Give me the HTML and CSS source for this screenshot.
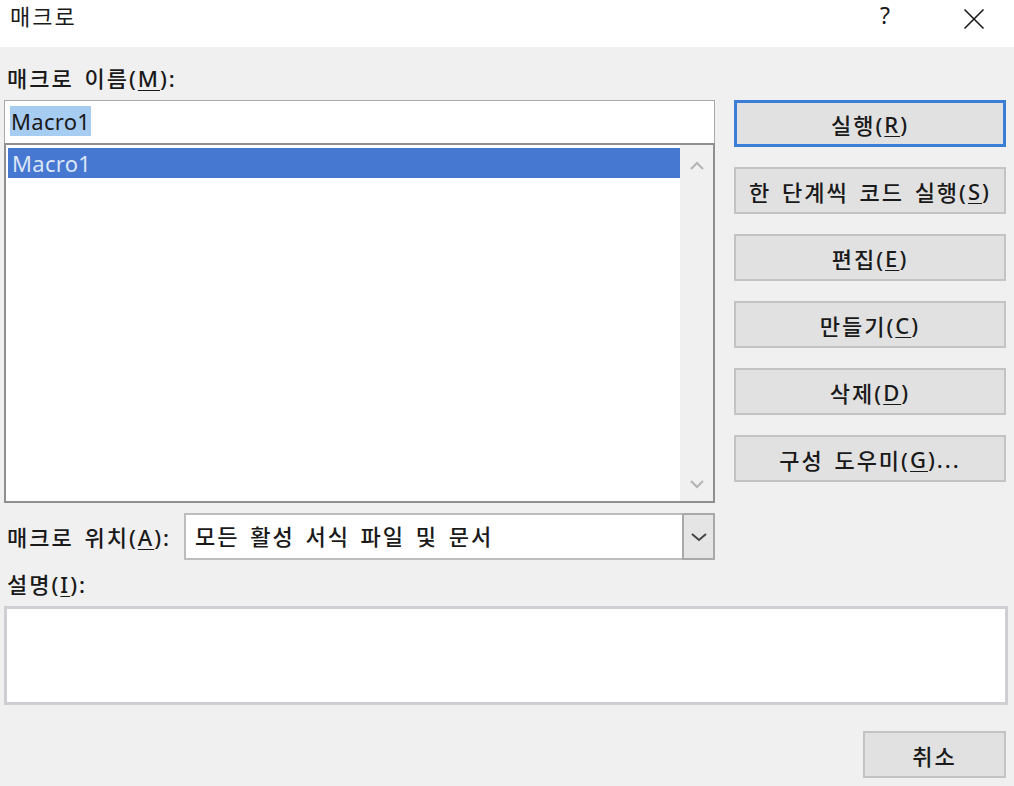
FILE: index.html
```html
<!DOCTYPE html>
<html lang="ko">
<head>
<meta charset="utf-8">
<title>매크로</title>
<link rel="stylesheet" href="styles.css">
</head>
<body>
<div class="dialog">
  <div class="titlebar">
    <div class="title">매크로</div>
    <div class="help">?</div>
    <div class="close">
      <svg width="22" height="22" viewBox="0 0 22 22"><path d="M1.5 1.5 L20.5 20.5 M20.5 1.5 L1.5 20.5" stroke="#1a1a1a" stroke-width="1.6" fill="none"/></svg>
    </div>
  </div>
  <div class="content">
    <div class="top">
      <div class="left">
        <div class="label">매크로 이름(<u>M</u>):</div>
        <div class="namebox"><span class="sel">Macro1</span></div>
        <div class="list">
          <div class="items">
            <div class="item selected">Macro1</div>
          </div>
          <div class="scroll">
            <svg width="16" height="10" viewBox="0 0 16 10"><path d="M2 8 L8 2 L14 8" stroke="#b4b4b4" stroke-width="2" fill="none"/></svg>
            <svg width="16" height="10" viewBox="0 0 16 10"><path d="M2 2 L8 8 L14 2" stroke="#b4b4b4" stroke-width="2" fill="none"/></svg>
          </div>
        </div>
      </div>
      <div class="buttons">
        <div class="btn default">실행(<u>R</u>)</div>
        <div class="btn">한 단계씩 코드 실행(<u>S</u>)</div>
        <div class="btn">편집(<u>E</u>)</div>
        <div class="btn">만들기(<u>C</u>)</div>
        <div class="btn">삭제(<u>D</u>)</div>
        <div class="btn">구성 도우미(<u>G</u>)...</div>
      </div>
    </div>
    <div class="location">
      <div class="label">매크로 위치(<u>A</u>):</div>
      <div class="combo">
        <div class="combo-text">모든 활성 서식 파일 및 문서</div>
        <div class="combo-btn">
          <svg width="18" height="10" viewBox="0 0 18 10"><path d="M2 2 L9 8 L16 2" stroke="#444" stroke-width="2" fill="none"/></svg>
        </div>
      </div>
    </div>
    <div class="label desc-label">설명(<u>I</u>):</div>
    <div class="desc"></div>
    <div class="footer">
      <div class="btn cancel">취소</div>
    </div>
  </div>
</div>
</body>
</html>
```
FILE: styles.css
```css
* { box-sizing: border-box; }
html, body { margin: 0; padding: 0; }
body {
  font-family: "Noto Sans", "Noto Sans CJK KR", sans-serif;
  color: #1a1a1a;
  background: #f0f0f0;
  letter-spacing: 2px;
  word-spacing: 3px;
  font-weight: 500;
}
.dialog {
  width: 1014px;
  height: 786px;
  background: #f0f0f0;
  overflow: hidden;
}
.titlebar {
  height: 47px;
  background: #ffffff;
  display: flex;
  align-items: flex-start;
}
.title {
  font-size: 22px;
  line-height: 30px;
  padding: 1px 0 0 10px;
  flex: 1;
  font-weight: 400;
}
.help {
  font-size: 23px;
  line-height: 30px;
  width: 20px;
  margin-top: 0;
  margin-right: 68px;
  text-align: center;
  letter-spacing: 0;
  font-weight: 400;
}
.close {
  margin-top: 8px;
  margin-right: 29px;
  height: 22px;
}
.content {
  padding: 17px 6px 0 4px;
}
.label {
  font-size: 22px;
  line-height: 28px;
  padding-left: 3px;
  white-space: nowrap;
}
u { text-underline-offset: 3px; text-decoration-thickness: 1px; }
.top {
  display: flex;
  gap: 19px;
}
.left {
  width: 711px;
  display: flex;
  flex-direction: column;
}
.left .label { height: 36px; }
.namebox {
  height: 43px;
  background: #fff;
  border: 1px solid #a8a8a8;
  border-bottom: none;
  padding: 7px 0 0 5px;
  font-size: 22px;
  line-height: 27px;
  letter-spacing: 0.3px;
  font-weight: 400;
}
.sel {
  background: #a7ccf1;
  padding: 0 1px;
}
.list {
  height: 360px;
  background: #fff;
  border: 2px solid #8f8f8f;
  display: flex;
  padding: 3px 0 2px 2px;
}
.items { flex: 1; }
.item {
  height: 30px;
  font-size: 22px;
  line-height: 30px;
  padding-left: 4px;
  letter-spacing: 0.3px;
  font-weight: 400;
}
.item.selected {
  background: #4677d1;
  color: #dbe6f7;
}
.scroll {
  width: 33px;
  margin: -3px 0 -2px 0;
  background: #f0f0f0;
  display: flex;
  flex-direction: column;
  justify-content: space-between;
  align-items: center;
  padding: 16px 0 12px;
}
.buttons {
  width: 272px;
  padding-top: 36px;
  display: flex;
  flex-direction: column;
  gap: 20px;
}
.btn {
  height: 47px;
  background: #e1e1e1;
  border: 2px solid #c3c3c3;
  display: flex;
  align-items: center;
  justify-content: center;
  font-size: 22px;
  color: #1a1a1a;
  white-space: nowrap;
}
.btn.default {
  border: 3px solid #3a7fd5;
}
.location {
  display: flex;
  align-items: center;
  margin-top: 10px;
  height: 47px;
}
.location .label { width: 180px; }
.combo {
  width: 531px;
  height: 47px;
  background: #fff;
  border: 2px solid #bdbdbd;
  display: flex;
}
.combo-text {
  flex: 1;
  font-size: 22px;
  line-height: 43px;
  padding-left: 9px;
  white-space: nowrap;
}
.combo-btn {
  width: 33px;
  margin: -2px -2px -2px 0;
  background: #e5e5e5;
  border: 2px solid #a9a9a9;
  display: flex;
  align-items: center;
  justify-content: center;
}
.desc-label {
  margin-top: 9px;
  height: 37px;
  line-height: 30px;
}
.desc {
  width: 1004px;
  height: 99px;
  background: #fff;
  border: 3px solid #cfcfd3;
}
.footer {
  display: flex;
  justify-content: flex-end;
  padding-top: 26px;
  padding-right: 2px;
}
.btn.cancel {
  width: 143px;
}
```
